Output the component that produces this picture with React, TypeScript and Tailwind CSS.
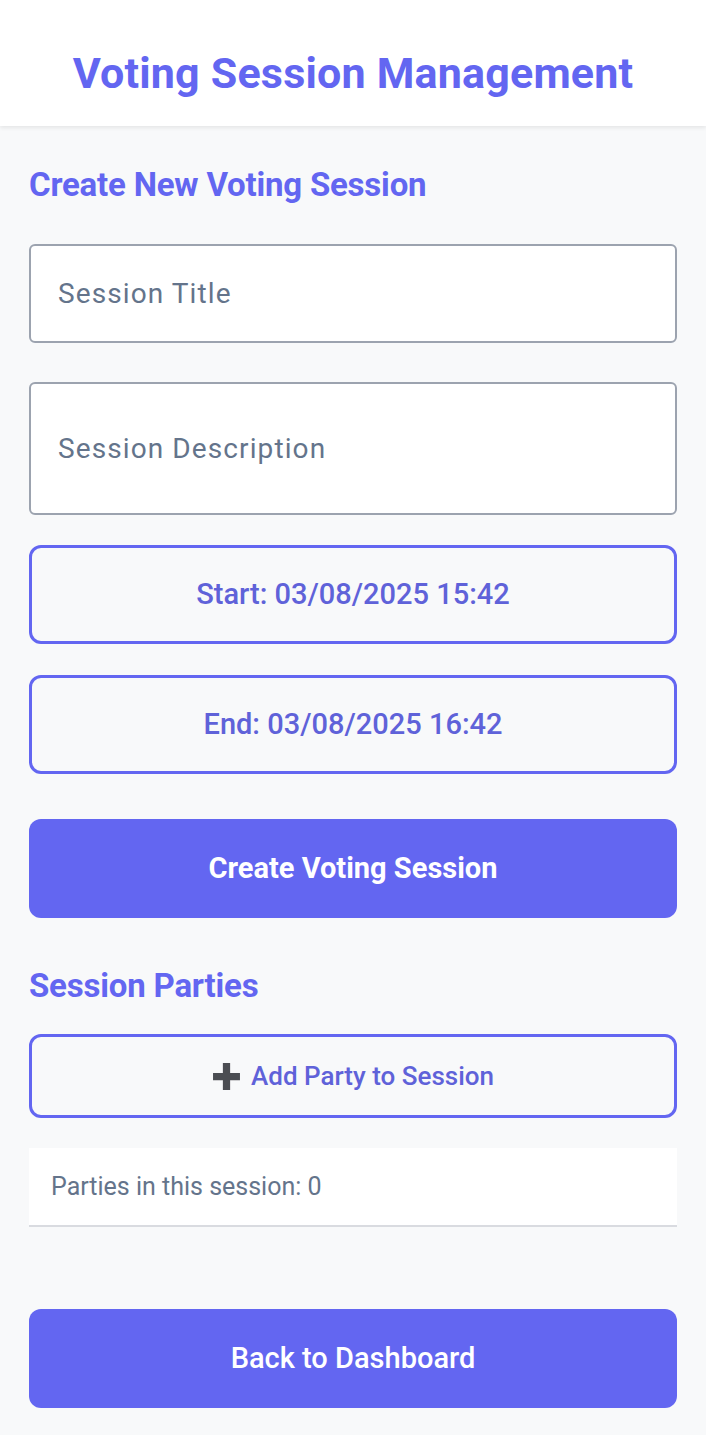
import React from "react";

export default function App() {
  const font = { fontFamily: "Roboto, 'Noto Sans', sans-serif" };
  return (
    <div className="min-h-[1435px] bg-[#f8f9fa]" style={font}>
      <header className="h-[126px] pt-[20px] bg-white flex items-center justify-center shadow-[0_2px_4px_rgba(0,0,0,0.08)] relative z-10">
        <h1 className="text-[43px] font-bold text-[#6366f1] tracking-[0.2px] leading-none">
          Voting Session Management
        </h1>
      </header>
      <main className="px-[29px] pt-[42px] flex flex-col">
        <h2 className="text-[33px] font-bold text-[#6366f1] leading-[34px] tracking-[-0.2px]">
          Create New Voting Session
        </h2>
        <div className="mt-[42px] h-[99px] bg-white border-2 border-[#9ca3af] rounded-[6px] flex items-center px-[27px]">
          <span className="text-[28px] text-[#64748b] tracking-[1.1px]">Session Title</span>
        </div>
        <div className="mt-[39px] h-[133px] bg-white border-2 border-[#9ca3af] rounded-[6px] flex items-center px-[27px]">
          <span className="text-[28px] text-[#64748b] tracking-[1.1px]">Session Description</span>
        </div>
        <div className="mt-[30px] h-[99px] border-[3px] border-[#6366f1] rounded-[12px] flex items-center justify-center">
          <span className="text-[29px] font-medium text-[#5f62d9]">Start: 03/08/2025 15:42</span>
        </div>
        <div className="mt-[31px] h-[99px] border-[3px] border-[#6366f1] rounded-[12px] flex items-center justify-center">
          <span className="text-[29px] font-medium text-[#5f62d9]">End: 03/08/2025 16:42</span>
        </div>
        <div className="mt-[45px] h-[99px] bg-[#6366f1] rounded-[12px] flex items-center justify-center">
          <span className="text-[29px] font-bold text-white">Create Voting Session</span>
        </div>
        <h2 className="mt-[51px] text-[33px] font-bold text-[#6366f1] leading-[34px] tracking-[-0.2px]">
          Session Parties
        </h2>
        <div className="mt-[31px] h-[84px] border-[3px] border-[#6366f1] rounded-[12px] flex items-center justify-center gap-[10px]">
          <svg width="29" height="29" viewBox="0 0 28 28">
            <path d="M10.5 1h7v9.5H27v7h-9.5V27h-7v-9.5H1v-7h9.5z" fill="#4b4d52" />
          </svg>
          <span className="text-[26px] font-medium text-[#5f62d9]">Add Party to Session</span>
        </div>
        <div className="mt-[30px] h-[79px] bg-white border-b-2 border-[#d9dbe0] flex items-center px-[22px]">
          <span className="text-[25px] text-[#64748b]">Parties in this session: 0</span>
        </div>
        <div className="mt-[82px] h-[99px] bg-[#6366f1] rounded-[12px] flex items-center justify-center">
          <span className="text-[29px] font-medium text-white">Back to Dashboard</span>
        </div>
      </main>
    </div>
  );
}
